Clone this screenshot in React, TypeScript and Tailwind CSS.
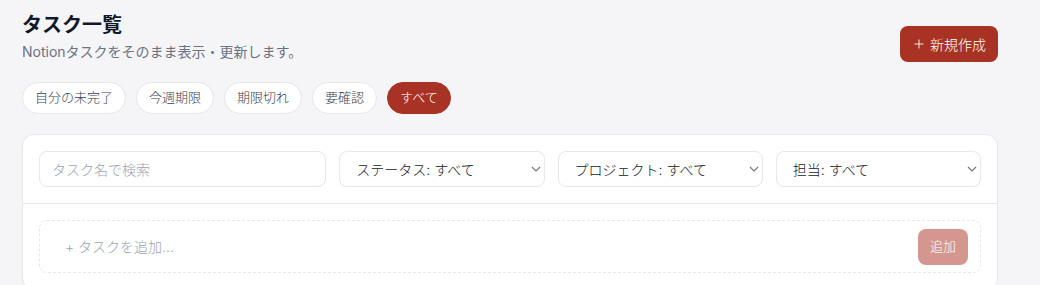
import { Plus } from 'lucide-react';

const filters = ['自分の未完了', '今週期限', '期限切れ', '要確認', 'すべて'];
const selects = ['ステータス: すべて', 'プロジェクト: すべて', '担当: すべて'];

function Select({ label }: { label: string }) {
    return (
        <div className="h-[36px] flex items-center justify-between pl-[16px] pr-[3px] bg-white border border-[#e5e7eb] rounded-lg text-[14px] text-[#111827] font-light">
            <span>{label}</span>
            <svg width="10" height="6" viewBox="0 0 10 6" fill="none" stroke="#6b7280" strokeWidth="1.1">
                <polyline points="1,1 5,5 9,1" />
            </svg>
        </div>
    );
}

export default function App() {
    return (
        <div
            className="min-h-screen w-full bg-[#f5f5f7] px-[22px] pt-[12px]"
            style={{ fontFamily: 'Inter, "Noto Sans CJK JP", sans-serif' }}
        >
            <div className="w-[976px]">
                <div className="flex items-start justify-between">
                    <div>
                        <h1 className="text-[20px] font-bold leading-[26px] text-[#111827]">タスク一覧</h1>
                        <p className="mt-[4px] text-[14px] leading-[20px] text-[#6b7280]">Notionタスクをそのまま表示・更新します。</p>
                    </div>
                    <button className="mt-[14px] h-[36px] px-[12px] flex items-center gap-[4px] rounded-lg bg-[#a83224] text-white text-[14px] font-light">
                        <Plus size={14} strokeWidth={1.5} />
                        新規作成
                    </button>
                </div>

                <div className="mt-[20px] flex gap-[10px]">
                    {filters.map((f) => (
                        <button
                            key={f}
                            className={
                                f === 'すべて'
                                    ? 'h-[32px] px-[12px] rounded-full bg-[#a83224] border border-[#a83224] text-white text-[13px] font-light'
                                    : 'h-[32px] px-[12px] rounded-full bg-white border border-[#e5e7eb] text-[#374151] text-[13px] font-light'
                            }
                        >
                            {f}
                        </button>
                    ))}
                </div>

                <div className="mt-[20px] bg-white border border-[#e5e7eb] rounded-xl">
                    <div className="p-[16px] grid grid-cols-[1.4fr_1fr_1fr_1fr] gap-[13px] border-b border-[#e5e7eb]">
                        <div className="h-[36px] flex items-center px-[12px] border border-[#e5e7eb] rounded-lg text-[14px] text-[#9ca3af] font-light">
                            タスク名で検索
                        </div>
                        {selects.map((s) => (
                            <Select key={s} label={s} />
                        ))}
                    </div>
                    <div className="p-[16px]">
                        <div className="h-[53px] flex items-center justify-between pl-[25px] pr-[12px] border border-dashed border-[#e5e7eb] rounded-lg">
                            <span className="text-[14px] text-[#9ca3af] font-light">+ タスクを追加...</span>
                            <button className="h-[36px] px-[12px] rounded-lg bg-[#a83224] opacity-50 text-white text-[13px] font-light">追加</button>
                        </div>
                    </div>
                </div>
            </div>
        </div>
    );
}
